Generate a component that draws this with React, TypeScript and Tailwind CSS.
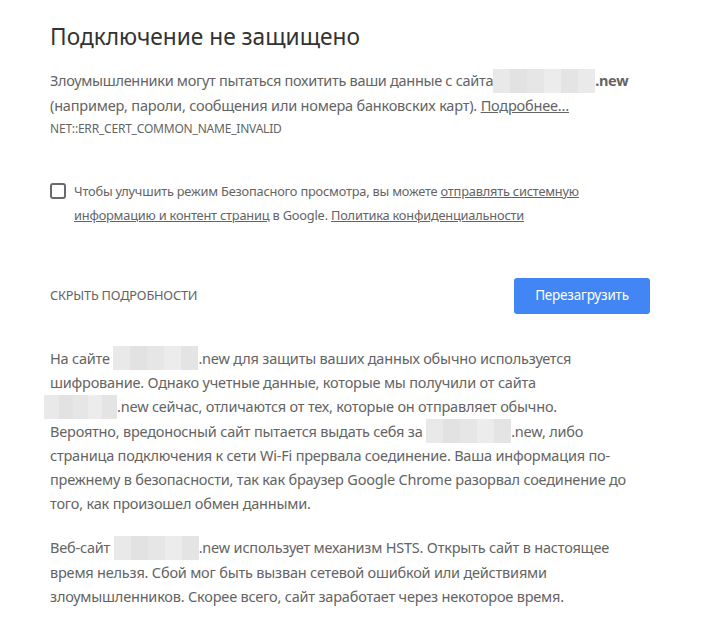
import React from "react";

function Blur({ w, cls = "" }: { w: number; cls?: string }) {
  const cells = Math.max(1, Math.round(w / 16));
  const shades = ["#e9e9e9", "#e2e2e2", "#e6e6e6", "#ececec", "#e4e4e4", "#eaeaea", "#e1e1e1"];
  return (
    <span
      className={"inline-flex align-middle h-[24px] -mt-[3px] " + cls}
      style={{ width: w }}
    >
      {Array.from({ length: cells }).map((_, i) => (
        <span key={i} className="flex-1 h-full" style={{ background: shades[i % shades.length] }} />
      ))}
    </span>
  );
}

export default function App() {
  return (
    <div
      className="bg-white w-[702px] h-[627px] overflow-hidden text-[#646464]"
      style={{ fontFamily: '"Noto Sans", "Open Sans", sans-serif' }}
    >
      <div className="ml-[50px] w-[600px] pt-[22px]">
        <h1 className="text-[22.7px] leading-[30px] text-[#333333] font-normal">
          Подключение не защищено
        </h1>
        <div className="mt-[16px] text-[14.5px] leading-[24px] whitespace-nowrap">
          <div className="tracking-[-0.3px]">
            Злоумышленники могут пытаться похитить ваши данные с сайта<Blur w={102} />
            <b className="font-bold">.new</b>
          </div>
          <div className="tracking-[-0.2px]">
            (например, пароли, сообщения или номера банковских карт).{" "}
            <span className="underline">Подробнее…</span>
          </div>
        </div>
        <div className="text-[12px] leading-[24px] tracking-[-0.2px]">NET::ERR_CERT_COMMON_NAME_INVALID</div>

        <div className="mt-[38px] flex gap-[8px]">
          <div className="mt-[4px] w-[16px] h-[16px] shrink-0 border-2 border-[#6a6a6a] rounded-[3px]" />
          <p className="text-[12.8px] leading-[24px] tracking-[-0.2px]">
            Чтобы улучшить режим Безопасного просмотра, вы можете{" "}
            <span className="underline">отправлять системную информацию и контент страниц</span> в Google.{" "}
            <span className="underline">Политика конфиденциальности</span>
          </p>
        </div>

        <div className="mt-[51px] flex items-center justify-between">
          <span className="text-[12.8px] tracking-[-0.2px]">СКРЫТЬ ПОДРОБНОСТИ</span>
          <button className="w-[136px] h-[36px] bg-[#4285f4] rounded-[3px] text-white text-[13.5px] tracking-[-0.2px]">
            Перезагрузить
          </button>
        </div>

        <p className="mt-[32px] text-[14.5px] leading-[24px] tracking-[-0.2px] whitespace-nowrap">
          На сайте <Blur w={85} />.new для защиты ваших данных обычно используется
          <br />
          шифрование. Однако учетные данные, которые мы получили от сайта
          <br />
          <Blur w={73} cls="-ml-[6px]" />.new сейчас, отличаются от тех, которые он отправляет обычно.
          <br />
          Вероятно, вредоносный сайт пытается выдать себя за <Blur w={85} />.new, либо
          <br />
          страница подключения к сети Wi-Fi прервала соединение. Ваша информация по-
          <br />
          прежнему в безопасности, так как браузер Google Chrome разорвал соединение до
          <br />
          того, как произошел обмен данными.
        </p>
        <p className="mt-[20px] text-[14.5px] leading-[24px] tracking-[-0.2px] whitespace-nowrap">
          Веб-сайт <Blur w={85} />.new использует механизм HSTS. Открыть сайт в настоящее
          <br />
          время нельзя. Сбой мог быть вызван сетевой ошибкой или действиями
          <br />
          злоумышленников. Скорее всего, сайт заработает через некоторое время.
        </p>
      </div>
    </div>
  );
}
